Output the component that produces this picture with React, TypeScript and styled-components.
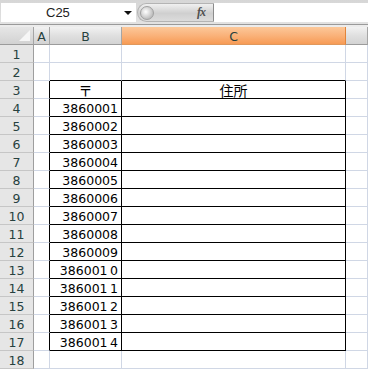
import React from "react";
import styled, { createGlobalStyle } from "styled-components";

const Global = createGlobalStyle`
  html, body { margin: 0; padding: 0; background: #ffffff; }
  body { font-family: "DejaVu Sans", "Noto Sans CJK JP", sans-serif; }
`;

const Screen = styled.div`
  width: 368px;
  height: 370px;
  overflow: hidden;
  background: #ffffff;
  display: flex;
  flex-direction: column;
`;

const FormulaBar = styled.div`
  height: 24px;
  display: flex;
  align-items: stretch;
  padding: 3px 0 2px 0;
  box-sizing: border-box;
  background: linear-gradient(#d6d6d6, #e2e2e2);
`;

const NameBox = styled.div`
  width: 135px;
  margin-left: 1px;
  background: #ffffff;
  display: flex;
  align-items: center;
  position: relative;
  font-family: "Liberation Sans", Arial, sans-serif;
  font-size: 13px;
  color: #222;
`;

const NameText = styled.span`
  margin-left: 45px;
`;

const DropArrow = styled.span`
  position: absolute;
  left: 123px;
  top: 8px;
  width: 0;
  height: 0;
  border-left: 4px solid transparent;
  border-right: 4px solid transparent;
  border-top: 4px solid #111;
`;

const Pill = styled.div`
  width: 77px;
  display: flex;
  align-items: center;
  margin-left: 1px;
  border-radius: 10px 0 0 10px;
  background: linear-gradient(#f0f0f0, #cfcfcf 55%, #dcdcdc);
  border: 1px solid #b4b4b4;
  border-right: none;
  box-sizing: border-box;
  position: relative;
`;

const Knob = styled.span`
  width: 14px;
  height: 14px;
  margin-left: 2px;
  border-radius: 50%;
  background: radial-gradient(circle at 40% 40%, #ffffff, #c8c8c8 60%, #a8a8a8);
  border: 1px solid #a0a0a0;
  box-sizing: border-box;
`;

const FxButton = styled.span`
  margin-left: auto;
  width: 24px;
  height: 100%;
  display: flex;
  align-items: center;
  justify-content: center;
  border-right: 1px solid #8c8c8c;
  font-family: "Liberation Serif", serif;
  font-style: italic;
  font-weight: bold;
  font-size: 12px;
  color: #505050;
  letter-spacing: -1px;
`;

const FormulaInput = styled.div`
  flex: 1;
  background: #ffffff;
`;

const Separator = styled.div`
  height: 1px;
  background: #9a9a9a;
`;

const Gap = styled.div`
  height: 2px;
  background: #ececec;
`;

const Sheet = styled.div`
  display: grid;
  grid-template-columns: 34px 16px 72px 224px 22px;
  grid-auto-rows: 18px;
`;

type HeadProps = { $sel?: boolean };

const ColHead = styled.div<HeadProps>`
  box-sizing: border-box;
  display: flex;
  align-items: center;
  justify-content: center;
  font-family: "DejaVu Sans", sans-serif;
  font-size: 12.5px;
  color: #27413e;
  padding-top: 1px;
  background: ${(p) =>
    p.$sel
      ? "linear-gradient(#fcc89a, #fab27a 50%, #f79b55)"
      : "linear-gradient(#f2f2f2, #e0e0e0 50%, #d3d3d3)"};
  border-right: 1px solid ${(p) => (p.$sel ? "#e2843a" : "#a5a5a5")};
  border-bottom: 1px solid ${(p) => (p.$sel ? "#e0985c" : "#9b9b9b")};
`;

const Corner = styled.div`
  box-sizing: border-box;
  background: linear-gradient(#e6e6e6, #d2d2d2);
  border-right: 1px solid #a5a5a5;
  border-bottom: 1px solid #9b9b9b;
  position: relative;
`;

const CornerTri = styled.span`
  position: absolute;
  right: 3px;
  bottom: 3px;
  width: 0;
  height: 0;
  border-left: 11px solid transparent;
  border-bottom: 11px solid #f6f6f6;
`;

const RowHead = styled.div`
  box-sizing: border-box;
  display: flex;
  align-items: center;
  justify-content: center;
  font-family: "DejaVu Sans", sans-serif;
  font-size: 12.5px;
  color: #27413e;
  padding-top: 1px;
  background: #e6e6e6;
  border-right: 1px solid #9e9e9e;
  border-bottom: 1px solid #c6c6c6;
`;

type CellProps = { $r?: boolean; $b?: boolean; $align?: "left" | "center" | "right" };

const Cell = styled.div<CellProps>`
  box-sizing: border-box;
  display: flex;
  align-items: center;
  justify-content: ${(p) =>
    p.$align === "right" ? "flex-end" : p.$align === "center" ? "center" : "flex-start"};
  padding: 1px 3px 0 3px;
  font-family: "DejaVu Sans", "Noto Sans CJK JP", sans-serif;
  font-size: 12.5px;
  color: #000;
  white-space: nowrap;
  border-right: 1px solid ${(p) => (p.$r ? "#000" : "#d0d7e5")};
  border-bottom: 1px solid ${(p) => (p.$b ? "#000" : "#d0d7e5")};
`;

const Zip = styled.span`
  font-family: "Noto Sans CJK JP", sans-serif;
  font-size: 14px;
`;

const Addr = styled.span`
  font-family: "Noto Sans CJK JP", sans-serif;
  font-size: 14px;
`;

const codes = [
  "3860001",
  "3860002",
  "3860003",
  "3860004",
  "3860005",
  "3860006",
  "3860007",
  "3860008",
  "3860009",
  "386001\u20090",
  "386001\u20091",
  "386001\u20092",
  "386001\u20093",
  "386001\u20094",
];

export default function App() {
  const rows: React.ReactNode[] = [];
  for (let r = 1; r <= 18; r++) {
    const inTable = r >= 3 && r <= 17;
    const topEdge = r === 2 || inTable;
    let bContent: React.ReactNode = null;
    let cContent: React.ReactNode = null;
    if (r === 3) {
      bContent = <Zip>〒</Zip>;
      cContent = <Addr>住所</Addr>;
    } else if (r >= 4 && r <= 17) {
      bContent = codes[r - 4];
    }
    rows.push(
      <React.Fragment key={r}>
        <RowHead>{r}</RowHead>
        <Cell $r={inTable} />
        <Cell $r={inTable} $b={topEdge} $align={r === 3 ? "center" : "right"}>
          {bContent}
        </Cell>
        <Cell $r={inTable} $b={topEdge} $align="center">
          {cContent}
        </Cell>
        <Cell />
      </React.Fragment>
    );
  }
  return (
    <Screen>
      <Global />
      <FormulaBar>
        <NameBox>
          <NameText>C25</NameText>
          <DropArrow />
        </NameBox>
        <Pill>
          <Knob />
          <FxButton>fx</FxButton>
        </Pill>
        <FormulaInput />
      </FormulaBar>
      <Separator />
      <Gap />
      <Sheet>
        <Corner>
          <CornerTri />
        </Corner>
        <ColHead>A</ColHead>
        <ColHead>B</ColHead>
        <ColHead $sel>C</ColHead>
        <ColHead />
        {rows}
      </Sheet>
    </Screen>
  );
}
